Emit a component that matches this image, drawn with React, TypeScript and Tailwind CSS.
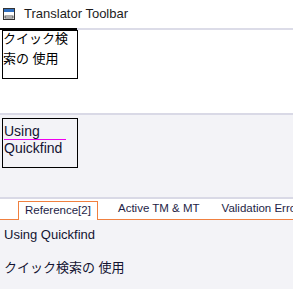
export default function App() {
  const ui = { fontFamily: '"Liberation Sans", Arial, "Noto Sans CJK JP", sans-serif' };
  const jp = { fontFamily: '"Liberation Sans", "Noto Sans CJK JP", sans-serif' };

  return (
    <div className="flex h-[289px] w-[293px] flex-col overflow-hidden bg-white" style={ui}>
      {/* title */}
      <div className="flex h-[28px] items-center gap-[9px] pl-[3px]">
        <svg width="12" height="12" viewBox="0 0 12 12" className="shrink-0">
          <rect x="0.5" y="0.5" width="11" height="11" fill="#fff" stroke="#333" />
          <rect x="1" y="1" width="10" height="3" fill="#2f6fbf" />
          <rect x="2" y="8" width="8" height="2" fill="#fff" stroke="#333" strokeWidth="0.8" />
        </svg>
        <span className="text-[13px] text-[#1c1c1c]">Translator Toolbar</span>
      </div>
      <div className="flex h-[2px]">
        <div className="w-[77px] shrink-0 bg-black" />
        <div className="flex-1 bg-[#dcdce8]" />
      </div>

      {/* upper pane */}
      <div className="h-[83px] bg-white pl-[2px]">
        <div
          className="h-[49px] w-[76px] overflow-hidden border border-black text-[13px] leading-[20px] text-black"
          style={jp}
        >
          <div className="-mt-[2px]">クイック検索の 使用</div>
        </div>
      </div>
      <div className="h-[2px] bg-[#d9d9e6]" />

      {/* lower pane */}
      <div className="h-[82px] bg-[#f3f3f7] pl-[2px] pt-[3px]">
        <div className="h-[50px] w-[76px] border border-black pl-[1px] text-[14px] leading-[16px] text-[#141432]">
          <div className="w-[62px] border-b border-[#ee00ee] pt-[4px]">Using</div>
          <div>Quickfind</div>
        </div>
      </div>
      <div className="h-[2px] bg-[#d9d9e6]" />

      {/* tabs */}
      <div className="flex h-[21px] items-end bg-white text-[11.5px] text-[#1e1e46]">
        <div className="h-full w-[18px] shrink-0 border-b border-[#f08040]" />
        <div className="flex h-[19px] w-[80px] shrink-0 items-center justify-center border border-b-0 border-[#f08040]">
          Reference[2]
        </div>
        <div className="flex h-full min-w-0 flex-1 items-center overflow-hidden whitespace-nowrap border-b border-[#f08040] pl-[20px]">
          <span>Active TM &amp; MT</span>
          <span className="ml-[22px]">Validation Errors</span>
        </div>
      </div>

      {/* content */}
      <div className="flex-1 bg-[#f3f3f7] px-[4px] pt-[5px] text-[13px] text-[#141432]">
        <div className="leading-[20px]">Using Quickfind</div>
        <div className="mt-[13px] leading-[20px]" style={jp}>
          クイック検索の 使用
        </div>
      </div>
    </div>
  );
}
